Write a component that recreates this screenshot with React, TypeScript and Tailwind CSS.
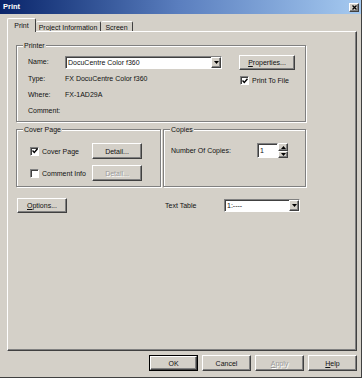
import type { ReactNode } from 'react';

const raised =
  'border border-t-white border-l-white border-r-[#404040] border-b-[#404040] shadow-[inset_-1px_-1px_0_#808080]';
const sunken =
  'border border-t-[#808080] border-l-[#808080] border-r-white border-b-white shadow-[inset_1px_1px_0_#404040]';

function Button({
  children,
  className = '',
  disabled = false,
}: {
  children: ReactNode;
  className?: string;
  disabled?: boolean;
}) {
  return (
    <div
      className={`${raised} bg-[#d4d0c8] flex items-center justify-center leading-none ${
        disabled ? 'text-[#9a9a9a] [text-shadow:1px_1px_0_#fff]' : ''
      } ${className}`}
    >
      {children}
    </div>
  );
}

function Group({ title, className = '', children }: { title: string; className?: string; children?: ReactNode }) {
  return (
    <div className={`relative border border-[#808080] shadow-[inset_1px_1px_0_#fff,1px_1px_0_#fff] ${className}`}>
      {/* Legend sits over the top border */}
      <span className="absolute -top-[5px] left-[6px] px-[1px] bg-[#d4d0c8] leading-[9px]">{title}</span>
      {children}
    </div>
  );
}

function Check({ checked = false }: { checked?: boolean }) {
  return (
    <div className={`w-[9px] h-[9px] shrink-0 bg-white ${sunken} flex items-center justify-center`}>
      {checked && (
        <svg width="6" height="6" viewBox="0 0 6 6">
          <path d="M0.5 2.5 L2.3 4.4 L5.5 0.8" stroke="#000" strokeWidth="1.4" fill="none" />
        </svg>
      )}
    </div>
  );
}

function Arrow({ up = false }: { up?: boolean }) {
  return (
    <svg width="5" height="3" viewBox="0 0 5 3">
      <polygon points={up ? '0,3 5,3 2.5,0' : '0,0 5,0 2.5,3'} fill="#000" />
    </svg>
  );
}

function Combo({ value, className = '' }: { value: string; className?: string }) {
  return (
    <div className={`${sunken} bg-white flex items-stretch ${className}`}>
      <span className="flex-1 pl-[2px] flex items-center leading-none whitespace-nowrap overflow-hidden">{value}</span>
      <div className={`${raised} bg-[#d4d0c8] w-[10px] flex items-center justify-center`}>
        <Arrow />
      </div>
    </div>
  );
}

export default function App() {
  return (
    <div className="w-[362px] h-[378px] bg-[#d4d0c8] flex flex-col border-r border-b border-r-[#404040] border-b-[#404040] font-['Liberation_Sans',Arial,sans-serif] text-[7px] text-[#111] overflow-hidden">
      {/* Title bar */}
      <div className="h-[14px] shrink-0 flex items-center justify-between pl-[3px] pr-[2px] bg-gradient-to-r from-[#0a246a] via-[#5b7fbf] to-[#a6caf0]">
        <span className="text-white font-bold text-[7.5px] leading-none">Print</span>
        <div className={`${raised} w-[10px] h-[9px] bg-[#d4d0c8] flex items-center justify-center`}>
          <svg width="5" height="5" viewBox="0 0 5 5">
            <path d="M0.5 0.5 L4.5 4.5 M4.5 0.5 L0.5 4.5" stroke="#000" strokeWidth="1.3" />
          </svg>
        </div>
      </div>

      {/* Tabs */}
      <div className="h-[17px] shrink-0 flex items-end pl-[7px]">
        <div className="relative z-10 -mb-[1px] w-[29px] h-[14px] bg-[#d4d0c8] border-l border-t border-r border-l-white border-t-white border-r-[#404040] rounded-t-[2px] flex justify-center pt-[3px] leading-none">
          Print
        </div>
        <div className="w-[65px] h-[10px] border-t border-r border-t-white border-r-[#404040] rounded-t-[2px] flex justify-center pt-[2px] leading-none">
          Project Information
        </div>
        <div className="w-[32px] h-[10px] border-t border-r border-t-white border-r-[#404040] rounded-t-[2px] flex justify-center pt-[2px] leading-none">
          Screen
        </div>
      </div>

      {/* Tab panel */}
      <div className={`ml-[7px] w-[350px] h-[320px] shrink-0 ${raised} pl-[8px] pt-[13px]`}>
        <Group title="Printer" className="w-[290px] h-[77px]">
          <div className="flex pt-[9px] pl-[11px]">
            <div className="flex flex-col">
              <div className="h-[15px] flex items-center">
                <span className="w-[37px]">Name:</span>
                <Combo value="DocuCentre Color f360" className="w-[157px] h-[13px]" />
              </div>
              <div className="mt-[3px] h-[12px] flex items-center">
                <span className="w-[37px]">Type:</span>
                <span>FX DocuCentre Color f360</span>
              </div>
              <div className="mt-[4px] h-[12px] flex items-center">
                <span className="w-[37px]">Where:</span>
                <span>FX-1AD29A</span>
              </div>
              <div className="mt-[4px] h-[12px] flex items-center">
                <span className="w-[37px]">Comment:</span>
              </div>
            </div>
            <div className="ml-[17px] flex flex-col">
              <Button className="w-[56px] h-[15px]">
                <span>
                  <span className="underline">P</span>roperties...
                </span>
              </Button>
              <div className="mt-[6px] ml-[1px] flex items-center gap-[3px]">
                <Check checked />
                <span className="leading-none">Print To File</span>
              </div>
            </div>
          </div>
        </Group>

        <div className="flex gap-[2px] mt-[7px]">
          <Group title="Cover Page" className="w-[145px] h-[58px]">
            <div className="pt-[13px] pl-[13px] flex flex-col gap-[6px]">
              <div className="h-[16px] flex items-center">
                <div className="w-[62px] flex items-center gap-[3px]">
                  <Check checked />
                  <span className="leading-none">Cover Page</span>
                </div>
                <Button className="w-[50px] h-[16px]">Detail...</Button>
              </div>
              <div className="h-[16px] flex items-center">
                <div className="w-[62px] flex items-center gap-[3px]">
                  <Check />
                  <span className="leading-none">Comment Info</span>
                </div>
                <Button disabled className="w-[50px] h-[16px]">
                  Detail...
                </Button>
              </div>
            </div>
          </Group>
          <Group title="Copies" className="w-[143px] h-[58px]">
            <div className="pt-[13px] pl-[7px] h-[15px] box-content flex items-center">
              <span className="w-[86px] leading-none">Number Of Copies:</span>
              <div className={`${sunken} bg-white w-[21px] h-[15px] flex items-center pl-[2px] leading-none`}>1</div>
              <div className="w-[10px] h-[15px] flex flex-col">
                <div className={`${raised} bg-[#d4d0c8] h-[8px] flex items-center justify-center`}>
                  <Arrow up />
                </div>
                <div className={`${raised} bg-[#d4d0c8] h-[7px] flex items-center justify-center`}>
                  <Arrow />
                </div>
              </div>
            </div>
          </Group>
        </div>

        <div className="mt-[11px] flex items-center">
          <Button className="ml-[1px] w-[50px] h-[15px]">
            <span>
              <span className="underline">O</span>ptions...
            </span>
          </Button>
          <span className="ml-[98px] w-[59px] leading-none">Text Table</span>
          <Combo value="1:----" className="w-[76px] h-[13px]" />
        </div>
      </div>

      {/* Dialog buttons */}
      <div className="mt-[4px] flex justify-end gap-[4px] pr-[4px]">
        <div className="border border-black w-[49px] h-[16px] flex">
          <Button className="flex-1">OK</Button>
        </div>
        <Button className="w-[49px] h-[16px]">Cancel</Button>
        <Button disabled className="w-[49px] h-[16px]">
          <span>
            <span className="underline">A</span>pply
          </span>
        </Button>
        <Button className="w-[49px] h-[16px]">
          <span>
            <span className="underline">H</span>elp
          </span>
        </Button>
      </div>
    </div>
  );
}
